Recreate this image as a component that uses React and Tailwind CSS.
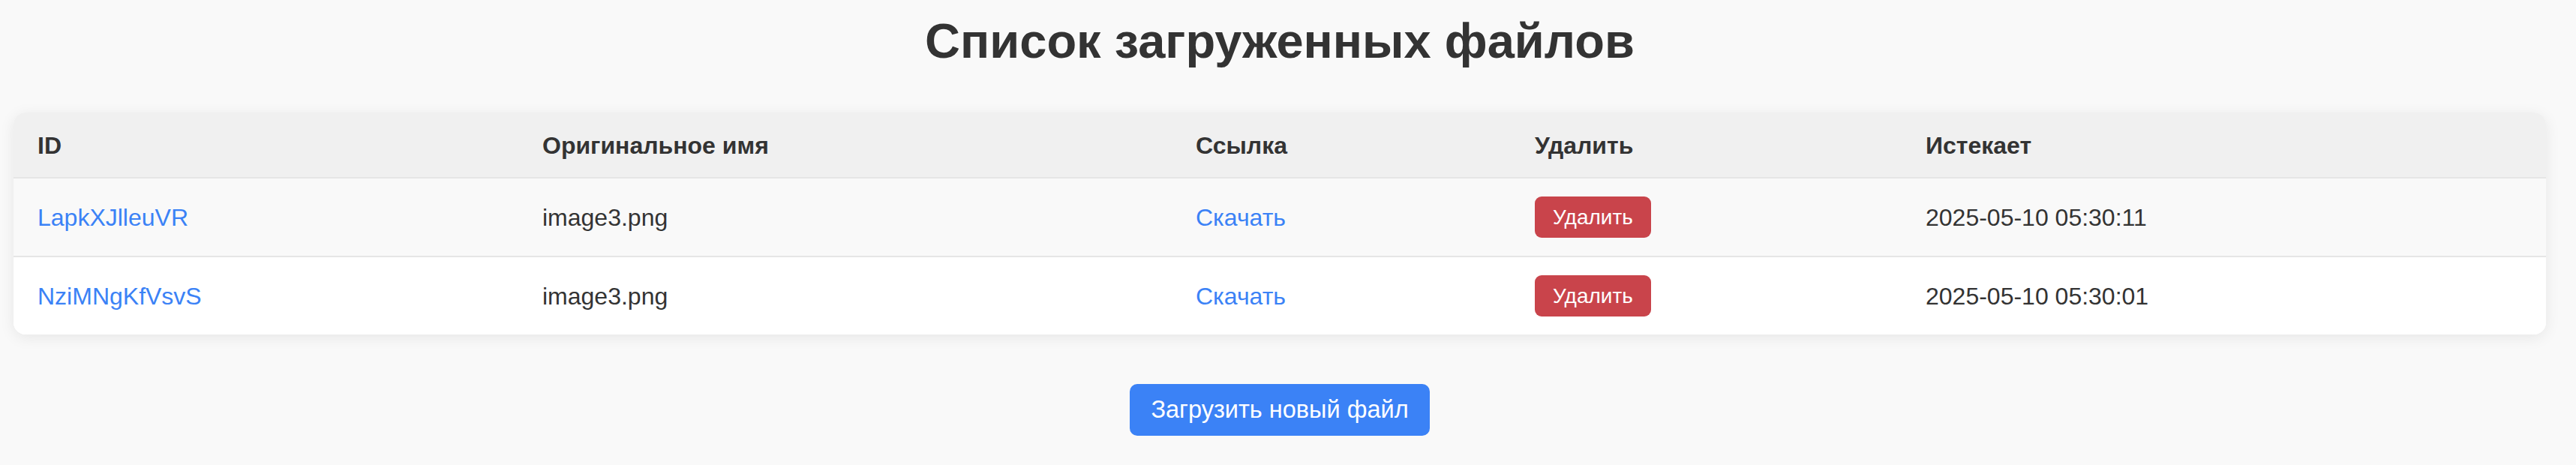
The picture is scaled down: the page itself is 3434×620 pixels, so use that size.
import React from 'react'

const files = [
  { id: 'LapkXJlleuVR', name: 'image3.png', expires: '2025-05-10 05:30:11' },
  { id: 'NziMNgKfVsvS', name: 'image3.png', expires: '2025-05-10 05:30:01' },
]

const cols = 'grid grid-cols-[673px_871px_452px_521px_1fr]'

export default function App() {
  return (
    <div className="min-h-screen bg-[#f9f9f9] text-[#333] font-['Liberation_Sans',Arial,sans-serif]">
      <div className="w-[3412px] px-[18px] pt-[18px] flex flex-col items-center">
        <h1 className="text-[65px] leading-[74px] font-bold">Список загруженных файлов</h1>

        {/* Files table */}
        <div className="mt-[58px] w-full rounded-[16px] bg-white overflow-hidden shadow-[0_4px_20px_rgba(0,0,0,0.08)]">
          <div className={`${cols} bg-[#f0f0f0] border-b-2 border-[#e6e6e6] text-[32px] leading-[38px] font-bold`}>
            <div className="px-[32px] pt-[25px] pb-[23px]">ID</div>
            <div className="px-[32px] pt-[25px] pb-[23px]">Оригинальное имя</div>
            <div className="px-[32px] pt-[25px] pb-[23px]">Ссылка</div>
            <div className="px-[32px] pt-[25px] pb-[23px]">Удалить</div>
            <div className="px-[32px] pt-[25px] pb-[23px]">Истекает</div>
          </div>
          {files.map((f, i) => (
            <div
              key={f.id}
              className={`${cols} items-center text-[32px] leading-[37px] ${
                i % 2 === 0 ? 'bg-[#f9f9f9]' : 'bg-white'
              } ${i < files.length - 1 ? 'border-b-2 border-[#e6e6e6]' : ''}`}
            >
              <div className="px-[32px] pt-[25px] pb-[23px]">
                <a href="#" className="text-[#3b82f6]">{f.id}</a>
              </div>
              <div className="px-[32px] pt-[25px] pb-[23px]">{f.name}</div>
              <div className="px-[32px] pt-[25px] pb-[23px]">
                <a href="#" className="text-[#3b82f6]">Скачать</a>
              </div>
              <div className="px-[32px] py-[24px]">
                <button className="h-[55px] px-[24px] rounded-[9px] bg-[#c9444b] text-white text-[28px] leading-[32px]">
                  Удалить
                </button>
              </div>
              <div className="px-[32px] pt-[25px] pb-[23px]">{f.expires}</div>
            </div>
          ))}
        </div>

        <button className="mt-[66px] px-[28px] py-[16px] rounded-[10px] bg-[#3b82f6] text-white text-[32.5px] leading-[37px]">
          Загрузить новый файл
        </button>
      </div>
    </div>
  )
}
